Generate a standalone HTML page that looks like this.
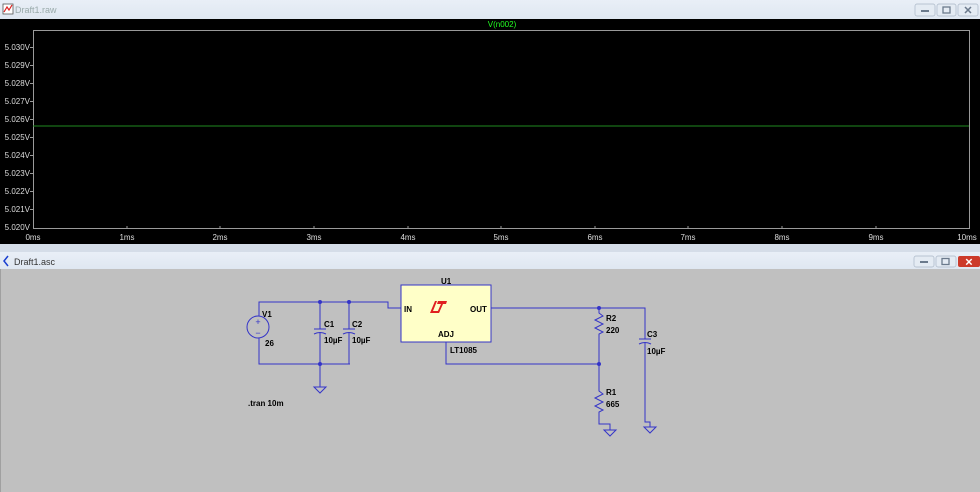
<!DOCTYPE html>
<html><head><meta charset="utf-8"><style>
html,body{margin:0;padding:0;width:980px;height:492px;overflow:hidden;background:#d5dde8}
svg{display:block}
text{font-family:"Liberation Sans",sans-serif}
</style></head><body>
<svg width="980" height="492" viewBox="0 0 980 492" xmlns="http://www.w3.org/2000/svg">
<defs>
<linearGradient id="tb" x1="0" y1="0" x2="0" y2="1"><stop offset="0" stop-color="#e9eff7"/><stop offset="1" stop-color="#dfe7f1"/></linearGradient>
</defs>
<!-- top window -->
<rect x="0" y="0" width="980" height="19" fill="url(#tb)"/>
<rect x="3" y="4" width="10" height="10" fill="#fff" stroke="#555" stroke-width="0.8"/>
<polyline points="4,12 7,7 9,10 12,5" fill="none" stroke="#d22" stroke-width="1.2"/>
<text x="15" y="13" font-size="9" fill="#9aa">Draft1.raw</text>
<g fill="#e4ebf3" stroke="#a9b6c6" stroke-width="0.7">
<rect x="915" y="4" width="20" height="12" rx="2"/><rect x="937" y="4" width="19" height="12" rx="2"/><rect x="958" y="4" width="20" height="12" rx="2"/>
</g>
<rect x="921" y="10" width="8" height="2" fill="#6b7a8c"/>
<rect x="943" y="7" width="7" height="6" fill="none" stroke="#6b7a8c" stroke-width="1.3"/>
<text x="968" y="14" font-size="11" text-anchor="middle" fill="#6b7a8c" font-weight="bold">✕</text>
<rect x="0" y="19" width="980" height="225" fill="#000"/>
<rect x="33.5" y="30.5" width="936" height="198" fill="none" stroke="#9a9a9a" stroke-width="1"/>
<text x="502" y="27" font-size="8" fill="#2f2" text-anchor="middle">V(n002)</text>
<line x1="33" y1="126" x2="969" y2="126" stroke="#1f8a1f" stroke-width="1"/>
<g font-size="8" fill="#ddd" text-anchor="end">
<text x="30" y="50">5.030V</text><text x="30" y="68">5.029V</text><text x="30" y="86">5.028V</text><text x="30" y="104">5.027V</text><text x="30" y="122">5.026V</text><text x="30" y="140">5.025V</text><text x="30" y="158">5.024V</text><text x="30" y="176">5.023V</text><text x="30" y="194">5.022V</text><text x="30" y="212">5.021V</text><text x="30" y="230">5.020V</text>
</g>
<g stroke="#9a9a9a" stroke-width="1">
<line x1="30" y1="47.5" x2="33" y2="47.5"/><line x1="30" y1="65.5" x2="33" y2="65.5"/><line x1="30" y1="83.5" x2="33" y2="83.5"/><line x1="30" y1="101.5" x2="33" y2="101.5"/><line x1="30" y1="119.5" x2="33" y2="119.5"/><line x1="30" y1="137.5" x2="33" y2="137.5"/><line x1="30" y1="155.5" x2="33" y2="155.5"/><line x1="30" y1="173.5" x2="33" y2="173.5"/><line x1="30" y1="191.5" x2="33" y2="191.5"/><line x1="30" y1="209.5" x2="33" y2="209.5"/>
<line x1="127" y1="226" x2="127" y2="229"/><line x1="220" y1="226" x2="220" y2="229"/><line x1="314" y1="226" x2="314" y2="229"/><line x1="408" y1="226" x2="408" y2="229"/><line x1="501" y1="226" x2="501" y2="229"/><line x1="595" y1="226" x2="595" y2="229"/><line x1="688" y1="226" x2="688" y2="229"/><line x1="782" y1="226" x2="782" y2="229"/><line x1="876" y1="226" x2="876" y2="229"/>
</g>
<g font-size="8" fill="#ddd" text-anchor="middle">
<text x="33" y="240">0ms</text><text x="127" y="240">1ms</text><text x="220" y="240">2ms</text><text x="314" y="240">3ms</text><text x="408" y="240">4ms</text><text x="501" y="240">5ms</text><text x="595" y="240">6ms</text><text x="688" y="240">7ms</text><text x="782" y="240">8ms</text><text x="876" y="240">9ms</text><text x="967" y="240">10ms</text>
</g>
<!-- bottom window -->
<rect x="0" y="244" width="980" height="8" fill="#d5dde8"/>
<rect x="0" y="252" width="980" height="17" fill="url(#tb)"/>
<path d="M8 256 L4 261 L8 266" fill="none" stroke="#1a3fd0" stroke-width="1.5"/>
<text x="14" y="265" font-size="9" fill="#333">Draft1.asc</text>
<g fill="#e4ebf3" stroke="#a9b6c6" stroke-width="0.7">
<rect x="914" y="256" width="20" height="11" rx="2"/><rect x="936" y="256" width="20" height="11" rx="2"/>
</g>
<rect x="958" y="256" width="22" height="11" rx="2" fill="#cc3a2a"/>
<rect x="920" y="261" width="8" height="2" fill="#6b7a8c"/>
<rect x="942" y="258.5" width="7" height="6" fill="none" stroke="#6b7a8c" stroke-width="1.3"/>
<text x="969" y="265.5" font-size="10" text-anchor="middle" fill="#fff" font-weight="bold">✕</text>
<rect x="0" y="269" width="980" height="223" fill="#c0c0c0"/>
<line x1="0.5" y1="269" x2="0.5" y2="492" stroke="#a0a0a0"/>
<!-- schematic -->
<g fill="none" stroke="#3434c8" stroke-width="1">
<polyline points="259,316 259,302 388,302 388,308 401,308"/>
<polyline points="259,338 259,364 350,364"/>
<line x1="320" y1="302" x2="320" y2="329"/><line x1="320" y1="333" x2="320" y2="364"/>
<line x1="349" y1="302" x2="349" y2="329"/><line x1="349" y1="333" x2="349" y2="364"/>
<line x1="314" y1="329" x2="326" y2="329"/><path d="M314 334 Q320 331 326 334"/>
<line x1="343" y1="329" x2="355" y2="329"/><path d="M343 334 Q349 331 355 334"/>
<line x1="320" y1="364" x2="320" y2="387"/>
<path d="M314 387 L326 387 L320 393 Z"/>
<polyline points="446,342 446,364 599,364"/>
<polyline points="491,308 645,308 645,339"/>
<line x1="639" y1="339" x2="651" y2="339"/><path d="M639 344 Q645 341 651 344"/>
<polyline points="645,343 645,422 650,422 650,427"/>
<path d="M644 427 L656 427 L650 433 Z"/>
<polyline points="599,308 599,313 603,316 595,320 603,324 595,328 603,332 599,334 599,388"/>
<polyline points="599,388 599,391 603,394 595,398 603,402 595,406 603,410 599,412 599,424 610,424 610,430"/>
<path d="M604 430 L616 430 L610 436 Z"/>
<circle cx="258" cy="327" r="11"/>
</g>
<g fill="#3434c8">
<circle cx="320" cy="302" r="2"/><circle cx="349" cy="302" r="2"/><circle cx="320" cy="364" r="2"/><circle cx="599" cy="308" r="2"/><circle cx="599" cy="364" r="2"/>
</g>
<text x="258" y="325" font-size="9" fill="#3434c8" text-anchor="middle">+</text>
<text x="258" y="336" font-size="9" fill="#3434c8" text-anchor="middle">−</text>
<rect x="401" y="285" width="90" height="57" fill="#ffffc8" stroke="#3434c8" stroke-width="1"/>
<path d="M437 301 L433 311 L440 311 L439 313 L430 313 L435 301 Z M438 301 L447 301 L446 304 L443 304 L439 313 L437 313 L441 304 L437 304 Z" fill="#e02020"/>
<g font-size="8" font-weight="bold" fill="#000">
<text x="262" y="317">V1</text><text x="265" y="346">26</text>
<text x="324" y="327">C1</text><text x="324" y="343">10µF</text>
<text x="352" y="327">C2</text><text x="352" y="343">10µF</text>
<text x="441" y="284">U1</text>
<text x="404" y="312">IN</text><text x="470" y="312">OUT</text><text x="438" y="337">ADJ</text>
<text x="450" y="353">LT1085</text>
<text x="606" y="321">R2</text><text x="606" y="333">220</text>
<text x="647" y="337">C3</text><text x="647" y="354">10µF</text>
<text x="606" y="395">R1</text><text x="606" y="407">665</text>
<text x="248" y="406">.tran 10m</text>
</g>
</svg>
</body></html>
